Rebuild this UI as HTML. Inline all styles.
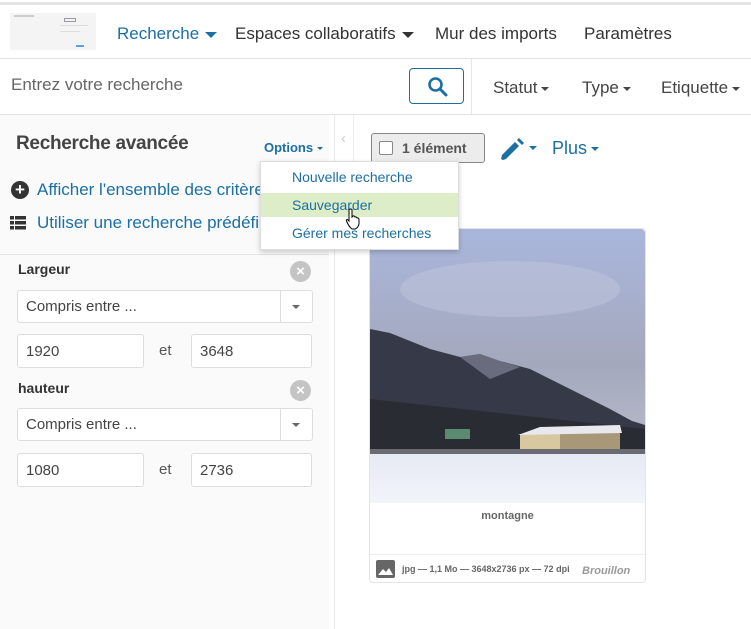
<!DOCTYPE html>
<html><head><meta charset="utf-8"><style>
*{box-sizing:border-box;margin:0;padding:0}
body{width:751px;height:629px;overflow:hidden;background:#fff;font-family:"Liberation Sans",Arial,sans-serif;position:relative;color:#333}
.a{position:absolute}
.blue{color:#1c6fa3}
.car{display:inline-block;width:0;height:0;border-left:4px solid transparent;border-right:4px solid transparent;border-top:4px solid currentColor;vertical-align:middle;margin-left:4px}
.inp{position:absolute;background:#fff;border:1px solid #ddd;border-radius:3px;font-size:15px;color:#444;padding-left:8px;display:flex;align-items:center}
.xc{position:absolute;width:21px;height:21px;border-radius:50%;background:#c4c4c4;color:#fff;font-size:15px;line-height:21px;text-align:center;font-weight:bold}
</style></head><body>
<div class="a" style="left:0;top:2px;width:751px;height:3px;background:#e4e4e4"></div>
<div class="a" style="left:10px;top:13px;width:86px;height:37px;background:#f4f4f4">
 <div class="a" style="left:54px;top:5px;width:12px;height:4px;border:1px solid #99a"></div>
 <div class="a" style="left:4px;top:2px;width:20px;height:2px;background:#ccc"></div>
 <div class="a" style="left:50px;top:12px;width:28px;height:1px;background:#ddd"></div>
 <div class="a" style="left:50px;top:18px;width:20px;height:1px;background:#ddd"></div>
 <div class="a" style="left:66px;top:32px;width:8px;height:2px;background:#5aa0e0"></div>
</div>
<div class="a" style="left:117px;top:24px;font-size:17px;white-space:nowrap"><span class="blue">Recherche<span class="car" style="border-width:6px 6px 0 6px;margin-left:6px"></span></span></div>
<div class="a" style="left:235px;top:24px;font-size:17px;white-space:nowrap;color:#333">Espaces collaboratifs<span class="car" style="border-width:6px 6px 0 6px;margin-left:6px"></span></div>
<div class="a" style="left:435px;top:24px;font-size:17px;white-space:nowrap;color:#333">Mur des imports</div>
<div class="a" style="left:584px;top:24px;font-size:17px;white-space:nowrap;color:#333">Paramètres</div>
<div class="a" style="left:0;top:58px;width:751px;height:1px;background:#e2e2e2"></div>
<div class="a" style="left:11px;top:75px;font-size:17px;color:#666">Entrez votre recherche</div>
<div class="a" style="left:409px;top:68px;width:55px;height:36px;border:1px solid #1c6fa3;border-radius:4px">
<svg class="a" style="left:17px;top:7px" width="22" height="22" viewBox="0 0 22 22"><circle cx="8.5" cy="8.5" r="6" fill="none" stroke="#1c6fa3" stroke-width="2.6"/><path d="M13 13l6 6" stroke="#1c6fa3" stroke-width="3" stroke-linecap="round"/></svg></div>
<div class="a" style="left:471px;top:59px;width:1px;height:55px;background:#e6e6e6"></div>
<div class="a" style="left:493px;top:78px;font-size:17px;white-space:nowrap;color:#444">Statut<span class="car"></span></div>
<div class="a" style="left:582px;top:78px;font-size:17px;white-space:nowrap;color:#444">Type<span class="car"></span></div>
<div class="a" style="left:661px;top:78px;font-size:17px;white-space:nowrap;color:#444">Etiquette<span class="car"></span></div>
<div class="a" style="left:0;top:114px;width:751px;height:1px;background:#e2e2e2"></div>
<div class="a" style="left:0;top:115px;width:329px;height:514px;background:#fafafa"></div>
<div class="a" style="left:329px;top:115px;width:5px;height:514px;background:#fff"></div>
<div class="a" style="left:334px;top:115px;width:1px;height:514px;background:#e8e8e8"></div>
<div class="a" style="left:335px;top:115px;width:19px;height:50px;background:#fff;border:1px solid #eee;border-top:none;border-left:none"></div>
<div class="a" style="left:341px;top:130px;font-size:15px;color:#ccc">&lsaquo;</div>
<div class="a" style="left:16px;top:133px;font-size:19px;font-weight:bold;color:#444;letter-spacing:-0.3px">Recherche avancée</div>
<div class="a blue" style="left:264px;top:140px;font-size:13px;font-weight:bold;white-space:nowrap">Options<span class="car" style="border-width:3px 3px 0 3px"></span></div>
<div class="a" style="left:11px;top:181px;width:18px;height:18px;border-radius:50%;background:#333;color:#fff;font-size:17px;line-height:18px;text-align:center;font-weight:bold">+</div>
<div class="a blue" style="left:37px;top:180px;font-size:17px;white-space:nowrap">Afficher l'ensemble des critères</div>
<svg class="a" style="left:10px;top:216px" width="16" height="14"><rect x="0" y="0" width="4" height="3.5" fill="#333"/><rect x="5" y="0" width="11" height="3.5" fill="#333"/><rect x="0" y="5" width="4" height="3.5" fill="#333"/><rect x="5" y="5" width="11" height="3.5" fill="#333"/><rect x="0" y="10" width="4" height="3.5" fill="#333"/><rect x="5" y="10" width="11" height="3.5" fill="#333"/></svg>
<div class="a blue" style="left:37px;top:213px;font-size:17px;white-space:nowrap">Utiliser une recherche prédéfinie</div>
<div class="a" style="left:0;top:254px;width:329px;height:1px;background:#e4e4e4"></div>
<div class="a" style="left:18px;top:261px;font-size:14px;font-weight:bold;color:#333">Largeur</div>
<div class="xc" style="left:290px;top:261px">×</div>
<div class="inp" style="left:17px;top:290px;width:296px;height:33px">Compris entre ...</div>
<div class="a" style="left:280px;top:291px;width:1px;height:31px;background:#ddd"></div>
<div class="a" style="left:292px;top:305px;border-left:4px solid transparent;border-right:4px solid transparent;border-top:4px solid #666"></div>
<div class="inp" style="left:17px;top:334px;width:127px;height:34px">1920</div>
<div class="a" style="left:159px;top:342px;font-size:15px;color:#555">et</div>
<div class="inp" style="left:191px;top:334px;width:121px;height:34px">3648</div>
<div class="a" style="left:18px;top:380px;font-size:14px;font-weight:bold;color:#333">hauteur</div>
<div class="xc" style="left:290px;top:380px">×</div>
<div class="inp" style="left:17px;top:408px;width:296px;height:33px">Compris entre ...</div>
<div class="a" style="left:280px;top:409px;width:1px;height:31px;background:#ddd"></div>
<div class="a" style="left:292px;top:423px;border-left:4px solid transparent;border-right:4px solid transparent;border-top:4px solid #666"></div>
<div class="inp" style="left:17px;top:453px;width:127px;height:34px">1080</div>
<div class="a" style="left:159px;top:461px;font-size:15px;color:#555">et</div>
<div class="inp" style="left:191px;top:453px;width:121px;height:34px">2736</div>
<div class="a" style="left:371px;top:133px;width:114px;height:30px;background:#ececec;border:1px solid #888;border-radius:3px"></div>
<div class="a" style="left:379px;top:141px;width:14px;height:14px;background:#fff;border:1px solid #888;border-radius:2px"></div>
<div class="a" style="left:402px;top:140px;font-size:14px;font-weight:bold;color:#555">1 élément</div>
<svg class="a" style="left:500px;top:137px" width="26" height="24" viewBox="0 0 26 24"><path d="M3 23 L1 22 L2 18 L15 5 L19 9 L6 22 Z" fill="#1c6fa3"/><path d="M17 3 L19 1 L24 6 L22 8 Z" fill="#1c6fa3"/></svg>
<div class="a" style="left:529px;top:146px;border-left:4px solid transparent;border-right:4px solid transparent;border-top:4px solid #1c6fa3"></div>
<div class="a blue" style="left:552px;top:138px;font-size:18px;white-space:nowrap">Plus<span class="car"></span></div>
<div class="a" style="left:369px;top:228px;width:277px;height:355px;border:1px solid #e4e4e4;border-radius:4px;background:#fff"></div>
<svg class="a" style="left:370px;top:229px;border-radius:4px 4px 0 0" width="275" height="274" viewBox="0 0 275 274">
<defs><linearGradient id="sk" x1="0" y1="0" x2="0" y2="1"><stop offset="0" stop-color="#a9b6dc"/><stop offset=".5" stop-color="#a4a8bc"/><stop offset="1" stop-color="#c4c8d4"/></linearGradient>
<linearGradient id="sn" x1="0" y1="0" x2="0" y2="1"><stop offset="0" stop-color="#e6eaf4"/><stop offset="1" stop-color="#f2f4fa"/></linearGradient></defs>
<rect width="275" height="274" fill="url(#sk)"/>
<ellipse cx="140" cy="60" rx="110" ry="28" fill="#c0c6dc" opacity=".5"/>
<path d="M0 100 L20 104 L60 120 L90 128 L110 125 L130 132 L160 140 L200 160 L240 180 L262 192 L275 196 L275 230 L0 230 Z" fill="#353948"/>
<path d="M90 128 L110 125 L130 132 L150 138 L120 150 Z" fill="#8c90a0" opacity=".6"/>
<path d="M0 170 L275 200 L275 230 L0 230 Z" fill="#2a2c34"/>
<rect x="150" y="205" width="40" height="18" fill="#d8c8a0"/>
<rect x="190" y="203" width="60" height="20" fill="#a89878"/>
<path d="M148 206 L170 198 L250 196 L252 204 Z" fill="#e8e8ee"/>
<rect x="75" y="200" width="25" height="10" fill="#5a8a70"/>
<rect x="0" y="220" width="275" height="8" fill="#6a6a72"/>
<rect x="0" y="225" width="275" height="49" fill="url(#sn)"/>
</svg>
<div class="a" style="left:370px;top:510px;width:275px;text-align:center;font-size:11px;font-weight:bold;color:#666">montagne</div>
<div class="a" style="left:370px;top:554px;width:275px;height:1px;background:#eee"></div>
<svg class="a" style="left:376px;top:560px" width="19" height="18"><rect width="19" height="18" rx="2" fill="#666"/><path d="M2 15 L7 9 L10 12 L13 8 L17 15 Z" fill="#fff"/></svg>
<div class="a" style="left:402px;top:564px;font-size:9px;font-weight:bold;color:#666;white-space:nowrap">jpg — 1,1 Mo — 3648x2736 px — 72 dpi</div>
<div class="a" style="left:582px;top:565px;font-size:11px;font-style:italic;font-weight:bold;color:#999">Brouillon</div>
<div class="a" style="left:260px;top:161px;width:199px;height:89px;background:#fff;border:1px solid #ddd;box-shadow:0 2px 5px rgba(0,0,0,.2)"></div>
<div class="a" style="left:261px;top:193px;width:197px;height:24px;background:#dcedc8"></div>
<div class="a blue" style="left:292px;top:169px;font-size:14px;white-space:nowrap">Nouvelle recherche</div>
<div class="a blue" style="left:292px;top:197px;font-size:14px;white-space:nowrap">Sauvegarder</div>
<div class="a blue" style="left:292px;top:225px;font-size:14px;white-space:nowrap">Gérer mes recherches</div>
<svg class="a" style="left:345px;top:208px" width="16" height="22" viewBox="0 0 16 22"><path d="M4 1.5 Q5.5 0.5 7 1.5 L7 9 L8 8 Q9.5 7.5 10 9 Q11.5 8.5 12 10 Q13.5 9.5 14 11 L14 16 Q13 20 10 21 L7 21 Q4 19 1.5 13 Q1 11.5 2.5 11.5 L4 13 Z" fill="#fff" stroke="#000" stroke-width="1"/></svg>
</body></html>
